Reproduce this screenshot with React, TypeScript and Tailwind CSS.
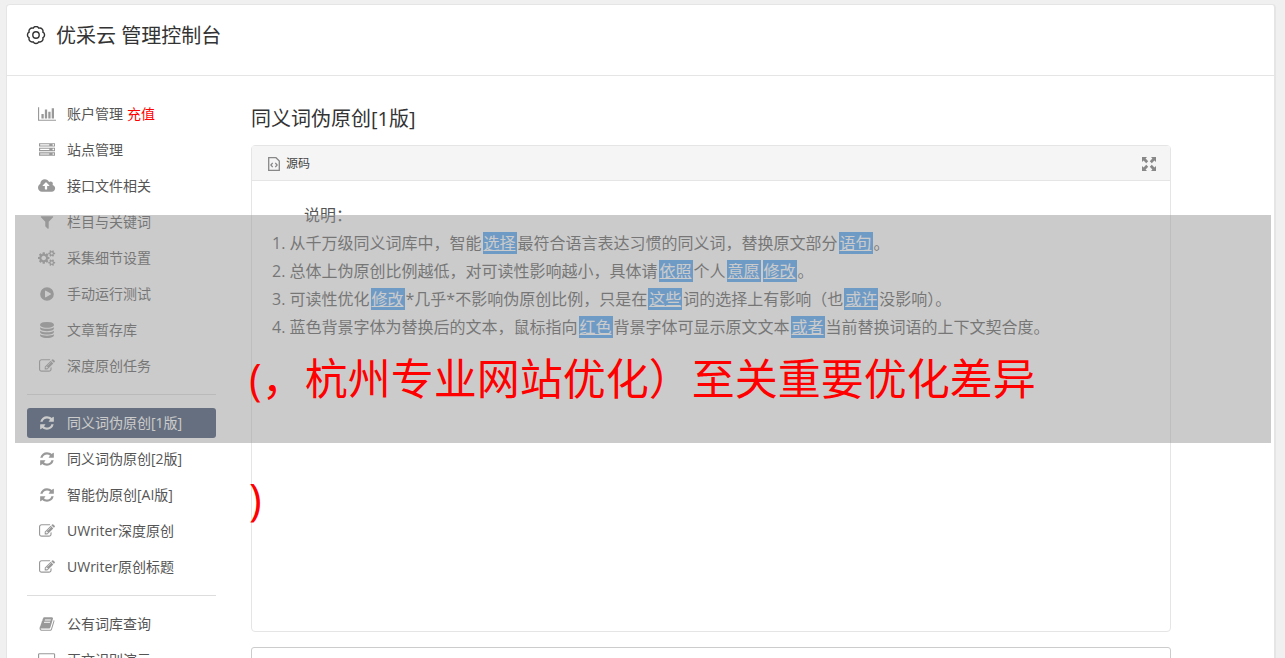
import React from 'react';

type IconProps = { d: string; width?: number };

// Glyphs are drawn on a 1792 unit high grid, some are wider than tall
const Glyph: React.FC<IconProps> = ({ d, width = 1792 }) => (
  <svg viewBox={`0 0 ${width} 1792`} className="h-4 w-auto max-w-none" fill="currentColor" aria-hidden="true">
    <path d={d} />
  </svg>
);

const icons: Record<string, IconProps> = {
  chart: {
    width: 2048,
    d: 'M640 896v512h-256v-512h256zm384-512v1024h-256v-1024h256zm1024 1152v128h-2048v-1536h128v1408h1920zm-640-896v768h-256v-768h256zm384-384v1152h-256v-1152h256z',
  },
  server: {
    d: 'M128 1408h1024v-128h-1024v128zm0-512h1024v-128h-1024v128zm1568 448q0-40-28-68t-68-28-68 28-28 68 28 68 68 28 68-28 28-68zm-1568-960h1024v-128h-1024v128zm1568 448q0-40-28-68t-68-28-68 28-28 68 28 68 68 28 68-28 28-68zm0-512q0-40-28-68t-68-28-68 28-28 68 28 68 68 28 68-28 28-68zm96 832v384h-1792v-384h1792zm0-512v384h-1792v-384h1792zm0-512v384h-1792v-384h1792z',
  },
  cloud: {
    width: 1920,
    d: 'M1280 864q0-14-9-23l-352-352q-9-9-23-9t-23 9l-351 351q-10 12-10 24 0 14 9 23t23 9h224v352q0 13 9.500 22.500t22.500 9.500h192q13 0 22.500-9.500t9.500-22.500v-352h224q13 0 22.500-9.500t9.500-22.500zm640 288q0 159-112.500 271.500t-271.500 112.500h-1088q-185 0-316.500-131.500t-131.500-316.500q0-130 70-240t188-165q-2-30-2-43 0-212 150-362t362-150q156 0 285.500 87t188.500 231q71-62 166-62 106 0 181 75t75 181q0 76-41 138 130 31 213.500 135.500t83.500 238.500z',
  },
  filter: {
    d: 'M1595 295q17 41-14 70l-493 493v742q0 42-39 59-13 5-25 5-27 0-45-19l-256-256q-19-19-19-45v-486l-493-493q-31-29-14-70 17-39 59-39h1280q42 0 59 39z',
  },
  cogs: {
    width: 1920,
    d: 'M896 896q0-106-75-181t-181-75-181 75-75 181 75 181 181 75 181-75 75-181zm768 512q0-52-38-90t-90-38-90 38-38 90q0 53 37.500 90.500t90.500 37.500 90.500-37.500 37.500-90.500zm0-1024q0-52-38-90t-90-38-90 38-38 90q0 53 37.500 90.500t90.500 37.500 90.500-37.500 37.500-90.500zm-384 421v185q0 10-7 19.500t-16 10.500l-155 24q-11 35-32 76 34 48 90 115 7 11 7 20 0 12-7 19-23 30-82.500 89.500t-78.500 59.500q-11 0-21-7l-115-90q-37 19-77 31-11 108-23 155-7 24-30 24h-186q-11 0-20-7.500t-10-17.500l-23-153q-34-10-75-31l-118 89q-7 7-20 7-11 0-21-8-144-133-144-160 0-9 7-19 10-14 41-53t47-61q-23-44-35-82l-152-24q-10-1-17-9.500t-7-19.500v-185q0-10 7-19.500t16-10.500l155-24q11-35 32-76-34-48-90-115-7-11-7-20 0-12 7-20 22-30 82-89t79-59q11 0 21 7l115 90q34-18 77-32 11-108 23-154 7-24 30-24h186q11 0 20 7.500t10 17.500l23 153q34 10 75 31l118-89q8-7 20-7 11 0 21 8 144 133 144 160 0 8-7 19-12 16-42 54t-45 60q23 48 34 82l152 23q10 2 17 10.500t7 19.500zm640 533v140q0 16-149 31-12 27-30 52 51 113 51 138 0 4-4 7-122 71-124 71-8 0-46-47t-52-68q-20 2-30 2t-30-2q-14 21-52 68t-46 47q-2 0-124-71-4-3-4-7 0-25 51-138-18-25-30-52-149-15-149-31v-140q0-16 149-31 13-29 30-52-51-113-51-138 0-4 4-7 4-2 35-20t59-34 30-16q8 0 46 46.500t52 67.500q20-2 30-2t30 2q51-71 92-112l6-2q4 0 124 70 4 3 4 7 0 25-51 138 17 23 30 52 149 15 149 31zm0-1024v140q0 16-149 31-12 27-30 52 51 113 51 138 0 4-4 7-122 71-124 71-8 0-46-47t-52-68q-20 2-30 2t-30-2q-14 21-52 68t-46 47q-2 0-124-71-4-3-4-7 0-25 51-138-18-25-30-52-149-15-149-31v-140q0-16 149-31 13-29 30-52-51-113-51-138 0-4 4-7 4-2 35-20t59-34 30-16q8 0 46 46.500t52 67.500q20-2 30-2t30 2q51-71 92-112l6-2q4 0 124 70 4 3 4 7 0 25-51 138 17 23 30 52 149 15 149 31z',
  },
  play: {
    d: 'M896 128a768 768 0 1 1 0 1536a768 768 0 1 1 0-1536zM704 520q-32 18-32 56v640q0 38 32 56 32 17 64-1l544-320q32-19 32-55t-32-55l-544-320q-32-18-64-1z',
  },
  database: {
    d: 'M896 768q237 0 443-43t325-127v170q0 69-103 128t-280 93.500-385 34.500-385-34.500-280-93.500-103-128v-170q119 84 325 127t443 43zm0 768q237 0 443-43t325-127v170q0 69-103 128t-280 93.500-385 34.500-385-34.500-280-93.500-103-128v-170q119 84 325 127t443 43zm0-384q237 0 443-43t325-127v170q0 69-103 128t-280 93.500-385 34.500-385-34.500-280-93.500-103-128v-170q119 84 325 127t443 43zm0-1152q208 0 385 34.500t280 93.500 103 128v128q0 69-103 128t-280 93.500-385 34.500-385-34.500-280-93.500-103-128v-128q0-69 103-128t280-93.500 385-34.500z',
  },
  edit: {
    d: 'M888 1184l116-116-152-152-116 116v56h96v96h56zm440-720q-16-16-33 1l-350 350q-17 17-1 33t33-1l350-350q17-17 1-33zm80 594v190q0 119-84.500 203.500t-203.500 84.500h-832q-119 0-203.500-84.500t-84.500-203.500v-832q0-119 84.500-203.500t203.500-84.500h832q63 0 117 25 15 7 18 23 3 17-9 29l-49 49q-14 14-32 8-23-6-45-6h-832q-66 0-113 47t-47 113v832q0 66 47 113t113 47h832q66 0 113-47t47-113v-126q0-13 9-22l64-64q15-15 35-7t20 29zm-96-738l288 288-672 672h-288v-288zm444 132l-92 92-288-288 92-92q28-28 68-28t68 28l152 152q28 28 28 68t-28 68z',
  },
  refresh: {
    d: 'M1639 1056q0 5-1 7-64 268-268 434.500t-478 166.500q-146 0-282.500-55t-243.500-157l-129 129q-19 19-45 19t-45-19-19-45v-448q0-26 19-45t45-19h448q26 0 45 19t19 45-19 45l-137 137q71 66 161 102t187 36q134 0 250-65t186-179q11-17 53-117 8-23 30-23h192q13 0 22.500 9.500t9.500 22.500zm25-800v448q0 26-19 45t-45 19h-448q-26 0-45-19t-19-45 19-45l138-138q-148-137-349-137-134 0-250 65t-186 179q-11 17-53 117-8 23-30 23h-199q-13 0-22.500-9.500t-9.500-22.500v-7q65-268 270-434.500t480-166.500q146 0 284 55.500t245 156.500l130-129q19-19 45-19t45 19 19 45z',
  },
  book: {
    d: 'M1703 478q40 57 18 129l-275 906q-19 64-76.500 107.500t-122.500 43.500h-923q-77 0-148.500-53.500t-99.500-131.500q-24-67-2-127 0-4 3-27t4-37q1-8-3-21.500t-3-19.500q2-11 8-21t16.500-23.500 16.500-23.500q23-38 45-91.500t30-91.500q3-10 .5-30t-.5-28q3-11 17-28t17-23q21-36 42-92t25-90q1-9-2.500-32t.5-28q4-13 22-30.500t22-22.500q19-26 42.500-84.500t27.500-96.500q1-8-3-25.500t-2-26.500q2-8 9-18t18-23 17-21q8-12 16.500-30.500t15-35 16-36 19.500-32 26.500-23.500 36-11.500 47.500 5.500l-1 3q38-9 51-9h761q74 0 114 56t18 130l-274 906q-36 119-71.500 153.500t-128.500 34.500h-869q-27 0-38 15-11 16-1 43 24 70 144 70h923q29 0 56-15.500t35-41.500l300-987q7-22 5-57 38 15 59 43zm-1064 2q-4 13 2 22.500t20 9.500h608q13 0 25.500-9.500t16.500-22.500l21-64q4-13-2-22.500t-20-9.500h-608q-13 0-25.500 9.500t-16.500 22.500zm-83 256q-4 13 2 22.500t20 9.500h608q13 0 25.500-9.500t16.500-22.500l21-64q4-13-2-22.500t-20-9.500h-608q-13 0-25.500 9.500t-16.500 22.500z',
  },
  screen: {
    width: 1920,
    d: 'M160 128h1600q66 0 113 47t47 113v1088q0 66-47 113t-113 47h-544v128h128v128h-768v-128h128v-128h-544q-66 0-113-47t-47-113v-1088q0-66 47-113t113-47zm0 128q-32 0-32 32v832q0 32 32 32h1600q32 0 32-32v-832q0-32-32-32z',
  },
};

type Item = { icon: string; label: string; note?: string; active?: boolean };

const groups: Item[][] = [
  [
    { icon: 'chart', label: '账户管理', note: '充值' },
    { icon: 'server', label: '站点管理' },
    { icon: 'cloud', label: '接口文件相关' },
    { icon: 'filter', label: '栏目与关键词' },
    { icon: 'cogs', label: '采集细节设置' },
    { icon: 'play', label: '手动运行测试' },
    { icon: 'database', label: '文章暂存库' },
    { icon: 'edit', label: '深度原创任务' },
  ],
  [
    { icon: 'refresh', label: '同义词伪原创[1版]', active: true },
    { icon: 'refresh', label: '同义词伪原创[2版]' },
    { icon: 'refresh', label: '智能伪原创[AI版]' },
    { icon: 'edit', label: 'UWriter深度原创' },
    { icon: 'edit', label: 'UWriter原创标题' },
  ],
  [
    { icon: 'book', label: '公有词库查询' },
    { icon: 'screen', label: '正文识别演示' },
  ],
];

const NavItem: React.FC<{ item: Item }> = ({ item }) => (
  <li>
    <a
      href="#"
      className={`flex h-[30px] items-center rounded-[3px] pl-2 text-sm whitespace-nowrap ${
        item.active ? 'bg-[#344766] text-white' : 'text-[#555]'
      }`}
    >
      <span className={`mr-2 flex w-6 shrink-0 justify-center ${item.active ? 'text-white' : 'text-[#999]'}`}>
        <Glyph {...icons[item.icon]} />
      </span>
      {item.label}
      {item.note && <span className="ml-1 text-[#f00]">{item.note}</span>}
    </a>
  </li>
);

// A replaced word inside the article text
const Word: React.FC<{ children: React.ReactNode }> = ({ children }) => (
  <a href="#" className="mx-px bg-[#459df5] px-px text-white underline">
    {children}
  </a>
);

const GearIcon = () => (
  <svg viewBox="0 0 20 20" className="h-5 w-5" fill="none" stroke="#333" strokeWidth="1.400" strokeLinejoin="round" aria-hidden="true">
    <path d="M7.200 2.200a3.100 3.100 0 0 1 5.600 0a3.100 3.100 0 0 1 4 4a3.100 3.100 0 0 1 0 5.600a3.100 3.100 0 0 1-4 4a3.100 3.100 0 0 1-5.600 0a3.100 3.100 0 0 1-4-4a3.100 3.100 0 0 1 0-5.600a3.100 3.100 0 0 1 4-4z" />
    <circle cx="10" cy="9" r="3.200" />
  </svg>
);

const SourceIcon = () => (
  <svg viewBox="0 0 12 14" className="h-3.5 w-3" fill="none" stroke="#888" strokeWidth="1.300" aria-hidden="true">
    <path d="M.7.7h7.300l3.300 3.300v9.300H.7z" />
    <path d="M4.700 5.900L2.900 8l1.800 2.100M7.300 5.900L9.100 8l-1.800 2.100" />
  </svg>
);

const ExpandIcon = () => (
  <svg viewBox="0 0 14 14" className="h-3.5 w-3.5" fill="#888" aria-hidden="true">
    <path d="M0 0h5L3.600 1.600l2.600 2.600-2 2L1.600 3.600 0 5zM14 0v5l-1.600-1.400-2.600 2.600-2-2 2.600-2.600L9 0zM0 14V9l1.600 1.400 2.600-2.600 2 2-2.600 2.600L5 14zM14 14H9l1.400-1.600-2.600-2.600 2-2 2.600 2.600L14 9z" />
  </svg>
);

export default function App() {
  return (
    <div className="relative h-screen overflow-hidden bg-[#f0f0f0] px-1.5 pt-1 font-['Open_Sans','Noto_Sans_CJK_SC',sans-serif]">
      <div className="mr-[3px] min-h-full rounded border border-r-2 border-[#e5e5e5] bg-white">
        <header className="flex h-[71px] items-start gap-2.5 border-b border-[#e5e5e5] pt-4 pl-[19px]">
          <span className="flex h-[30px] items-center">
            <GearIcon />
          </span>
          <h1 className="text-xl leading-[30px] text-[#333]">优采云 管理控制台</h1>
        </header>

        <div className="flex pl-5">
          <nav className="w-[189px] shrink-0 pt-[23px]">
            {groups.map((group, i) => (
              <ul
                key={i}
                className={`flex flex-col gap-1.5 ${i > 0 ? 'mt-[13px] border-t border-[#ddd] pt-[13px]' : ''}`}
              >
                {group.map((item) => (
                  <NavItem key={item.label} item={item} />
                ))}
              </ul>
            ))}
          </nav>

          <main className="ml-[35px] max-w-[920px] min-w-0 flex-1 pt-7">
            <h2 className="text-xl leading-[30px] text-[#333]">同义词伪原创[1版]</h2>

            <section className="mt-[11px] rounded border border-[#e5e5e5]">
              <div className="flex h-[35px] items-center border-b border-[#e5e5e5] bg-[#f5f5f5] px-3.5 pt-0.5">
                <button type="button" className="flex items-center gap-1.5 pl-0.5 text-xs text-[#444]">
                  <SourceIcon />
                  源码
                </button>
                <button type="button" aria-label="全屏" className="ml-auto">
                  <ExpandIcon />
                </button>
              </div>
              <div className="min-h-[450px] px-5 py-5 text-base leading-7 text-[#555]">
                <p className="indent-8">说明：</p>
                <p>
                  1. 从千万级同义词库中，智能<Word>选择</Word>最符合语言表达习惯的同义词，替换原文部分<Word>语句</Word>。
                </p>
                <p>
                  2. 总体上伪原创比例越低，对可读性影响越小，具体请<Word>依照</Word>个人<Word>意愿</Word>
                  <Word>修改</Word>。
                </p>
                <p>
                  3. 可读性优化<Word>修改</Word>*几乎*不影响伪原创比例，只是在<Word>这些</Word>词的选择上有影响（也<Word>或许</Word>没影响）。
                </p>
                <p>
                  4. 蓝色背景字体为替换后的文本，鼠标指向<Word>红色</Word>背景字体可显示原文文本<Word>或者</Word>当前替换词语的上下文契合度。
                </p>
              </div>
            </section>

            <textarea aria-label="原文" className="mt-[15px] block h-40 w-full resize-none rounded-[3px] border border-[#ccc] p-3" />
          </main>
        </div>
      </div>

      {/* caption band over the console */}
      <div className="absolute top-[215px] right-3.5 left-[15px] h-[228px] bg-[#979797]/50" />
      <p className="absolute top-[319px] right-3.5 left-[249px] text-[43px] leading-[120px] whitespace-nowrap text-[#f00]">
        (，杭州专业网站优化）至关重要优化差异
        <br />)
      </p>
    </div>
  );
}
